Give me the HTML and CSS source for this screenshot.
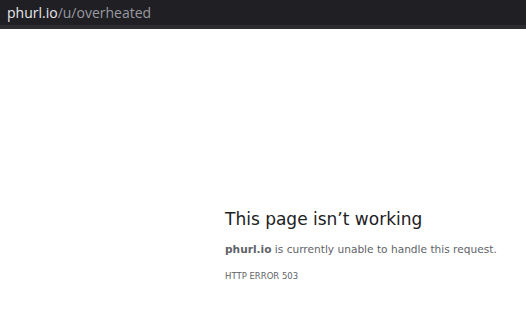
FILE: index.html
```html
<!DOCTYPE html>
<html lang="en">
<head>
    <meta charset="UTF-8">
    <title>phurl.io</title>
    <link rel="stylesheet" href="styles.css">
</head>
<body>
    <div class="addressbar">
        <span class="host">phurl.io</span><span class="path">/u/overheated</span>
    </div>
    <div class="strip"></div>

    <main class="error">
        <h1>This page isn’t working</h1>
        <p class="detail"><strong>phurl.io</strong> is currently unable to handle this request.</p>
        <p class="code">HTTP ERROR 503</p>
    </main>
</body>
</html>
```
FILE: styles.css
```css
body { margin: 0; background: #fff; font-family: "DejaVu Sans", sans-serif; }
.addressbar { background: #1f1f24; height: 25px; padding-left: 7px; font-family: "Open Sans", sans-serif; font-size: 14px; line-height: 26px; }
.host { color: #e8e8ea; }
.path { color: #9a9aa0; }
.strip { background: #2c2c31; height: 4px; }
.error { padding: 178px 0 0 225px; }
.error h1 { margin: 0; font-size: 17px; font-weight: normal; color: #202124; line-height: 24px; }
.detail { margin: 10px 0 0; font-size: 10.6px; color: #5f6368; line-height: 16px; }
.detail strong { color: #5f6368; }
.code { margin: 14px 0 0; font-size: 8.5px; color: #5f6368; text-transform: uppercase; }
```
